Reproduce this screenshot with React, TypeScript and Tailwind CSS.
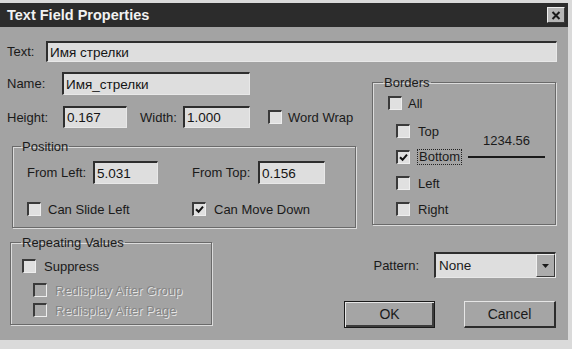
import React from "react";

type CheckProps = { checked?: boolean; disabled?: boolean };

const Check = ({ checked = false, disabled = false }: CheckProps) => (
  <span
    className={`inline-flex h-[14px] w-[14px] shrink-0 items-center justify-center border-t-2 border-l-2 border-r border-b border-t-[#3a3a3a] border-l-[#3a3a3a] border-r-[#eeeeee] border-b-[#eeeeee] ${
      disabled ? "bg-[#a8a8a8]" : "bg-[#e0e0e0]"
    }`}
  >
    {checked && (
      <svg width="9" height="9" viewBox="0 0 9 9">
        <path d="M1 4.2 L3.6 6.8 L8 1.6" stroke="#111" strokeWidth="2" fill="none" />
      </svg>
    )}
  </span>
);

const Field = ({ className, children }: { className: string; children?: React.ReactNode }) => (
  <div
    className={`flex items-center border-t-2 border-l-2 border-r border-b border-t-[#2e2e2e] border-l-[#2e2e2e] border-r-[#e8e8e8] border-b-[#e8e8e8] bg-[#dedede] pl-[2px] text-[13.5px] text-[#141414] ${className}`}
  >
    {children}
  </div>
);

const Dim = ({ children }: { children: React.ReactNode }) => (
  <span className="text-[#858585] [text-shadow:1px_1px_0_#e6e6e6]">{children}</span>
);

export default function App() {
  return (
    <div className="h-[349px] w-[572px] overflow-hidden bg-[#dadada] pt-[3px] font-['Liberation_Sans',Arial,sans-serif] text-[13px] leading-[15px] text-[#1a1a1a]">
      <div className="h-[337px] w-[568px] bg-[#a3a3a3]">
        {/* title bar */}
        <div className="flex h-[24px] items-center justify-between bg-[#2c2c2c] pl-[7px] pr-[3px]">
          <span className="text-[14.5px] font-bold text-[#f2f2f2]">Text Field Properties</span>
          <div className="flex h-[16px] w-[18px] items-center justify-center border-t border-l border-r border-b border-t-[#f0f0f0] border-l-[#f0f0f0] border-r-[#3a3a3a] border-b-[#3a3a3a] bg-[#b5b5b5]">
            <svg width="10" height="9" viewBox="0 0 10 9">
              <path d="M1.5 1 L8.5 8 M8.5 1 L1.5 8" stroke="#1a1a1a" strokeWidth="2" />
            </svg>
          </div>
        </div>

        {/* text row */}
        <div className="mt-[14px] flex items-center pl-[7px]">
          <span className="w-[39px]">Text:</span>
          <Field className="h-[21px] w-[511px]">Имя стрелки</Field>
        </div>

        <div className="mt-[10px] flex">
          {/* left column */}
          <div className="w-[372px] pl-[7px]">
            <div className="flex h-[23px] items-center">
              <span className="w-[55px]">Name:</span>
              <Field className="h-[23px] w-[188px]">Имя_стрелки</Field>
            </div>
            <div className="mt-[11px] flex h-[22px] items-center">
              <span className="w-[56px]">Height:</span>
              <Field className="h-[22px] w-[64px]">0.167</Field>
              <span className="ml-[13px] w-[43px]">Width:</span>
              <Field className="h-[22px] w-[67px]">1.000</Field>
              <span className="ml-[18px] flex items-center">
                <Check />
                <span className="ml-[6px]">Word Wrap</span>
              </span>
            </div>

            <fieldset className="mt-[11px] ml-[5px] h-[89px] w-[344px] border border-[#6a6a6a] pl-[14px] shadow-[inset_1px_1px_0_#dcdcdc,1px_1px_0_#dcdcdc]">
              <legend className="-ml-[6px] px-[1px]">Position</legend>
              <div className="mt-[7px] flex items-center">
                <span className="w-[66px]">From Left:</span>
                <Field className="h-[23px] w-[65px]">5.031</Field>
                <span className="ml-[34px] w-[66px]">From Top:</span>
                <Field className="h-[23px] w-[67px]">0.156</Field>
              </div>
              <div className="mt-[17px] flex h-[16px] items-center">
                <span className="flex w-[165px] items-center">
                  <Check />
                  <span className="ml-[7px]">Can Slide Left</span>
                </span>
                <span className="flex items-center">
                  <Check checked />
                  <span className="ml-[8px]">Can Move Down</span>
                </span>
              </div>
            </fieldset>
          </div>

          {/* right column */}
          <div className="mt-[3px] w-[184px]">
            <fieldset className="h-[150px] border border-[#6a6a6a] pl-[15px] shadow-[inset_1px_1px_0_#dcdcdc,1px_1px_0_#dcdcdc]">
              <legend className="-ml-[5px] px-[1px]">Borders</legend>
              <div className="mt-[5px] flex h-[16px] items-center">
                <Check />
                <span className="ml-[6px]">All</span>
              </div>
              <div className="flex">
                <div className="w-[68px] pl-[8px]">
                  <div className="mt-[12px] flex h-[16px] items-center">
                    <Check />
                    <span className="ml-[8px]">Top</span>
                  </div>
                  <div className="mt-[10px] flex h-[16px] items-center">
                    <Check checked />
                    <span className="ml-[7px] border border-dotted border-[#222] px-[1px] leading-[14px]">Bottom</span>
                  </div>
                  <div className="mt-[10px] flex h-[16px] items-center">
                    <Check />
                    <span className="ml-[8px]">Left</span>
                  </div>
                  <div className="mt-[10px] flex h-[16px] items-center">
                    <Check />
                    <span className="ml-[8px]">Right</span>
                  </div>
                </div>
                <div className="ml-[12px] w-[77px] pt-[22px]">
                  <div className="text-center">1234.56</div>
                  <div className="mt-[8px] h-[2px] bg-[#1a1a1a]" />
                </div>
              </div>
            </fieldset>
          </div>
        </div>

        <div className="mt-[7px] flex">
          <fieldset className="ml-[10px] h-[90px] w-[202px] border border-[#6a6a6a] pl-[11px] shadow-[inset_1px_1px_0_#dcdcdc,1px_1px_0_#dcdcdc]">
            <legend className="-ml-[1px] px-[1px]">Repeating Values</legend>
            <div className="mt-[8px] flex h-[16px] items-center">
              <Check />
              <span className="ml-[8px]">Suppress</span>
            </div>
            <div className="mt-[8px] flex h-[16px] items-center pl-[11px]">
              <Check disabled />
              <span className="ml-[8px]">
                <Dim>Redisplay After Group</Dim>
              </span>
            </div>
            <div className="mt-[4px] flex h-[16px] items-center pl-[11px]">
              <Check disabled />
              <span className="ml-[8px]">
                <Dim>Redisplay After Page</Dim>
              </span>
            </div>
          </fieldset>

          <div className="flex flex-1 flex-col items-end pr-[12px]">
            <div className="mt-[17px] flex items-center">
              <span>Pattern:</span>
              <div className="ml-[15px] flex h-[26px] w-[122px] items-stretch border-t-2 border-l-2 border-r border-b border-t-[#2e2e2e] border-l-[#2e2e2e] border-r-[#e8e8e8] border-b-[#e8e8e8] bg-[#dedede]">
                <div className="flex flex-1 items-center pl-[3px] text-[13.5px]">None</div>
                <div className="flex w-[19px] items-center justify-center border-t border-l border-r border-b border-t-[#efefef] border-l-[#efefef] border-r-[#3a3a3a] border-b-[#3a3a3a] bg-[#acacac]">
                  <svg width="7" height="4" viewBox="0 0 7 4">
                    <path d="M0 0 H7 L3.5 4 Z" fill="#1a1a1a" />
                  </svg>
                </div>
              </div>
            </div>
            <div className="mt-[23px] flex gap-[29px]">
              <button className="flex h-[27px] w-[91px] items-center justify-center border border-[#1a1a1a] bg-[#a5a5a5] text-[14px] shadow-[inset_1px_1px_0_#e6e6e6,inset_-2px_-2px_0_#3c3c3c]">
                OK
              </button>
              <button className="flex h-[27px] w-[92px] items-center justify-center border-t border-l border-t-[#e6e6e6] border-l-[#e6e6e6] border-r-2 border-b-2 border-r-[#2c2c2c] border-b-[#2c2c2c] bg-[#a5a5a5] text-[14px]">
                Cancel
              </button>
            </div>
          </div>
        </div>
      </div>
    </div>
  );
}
